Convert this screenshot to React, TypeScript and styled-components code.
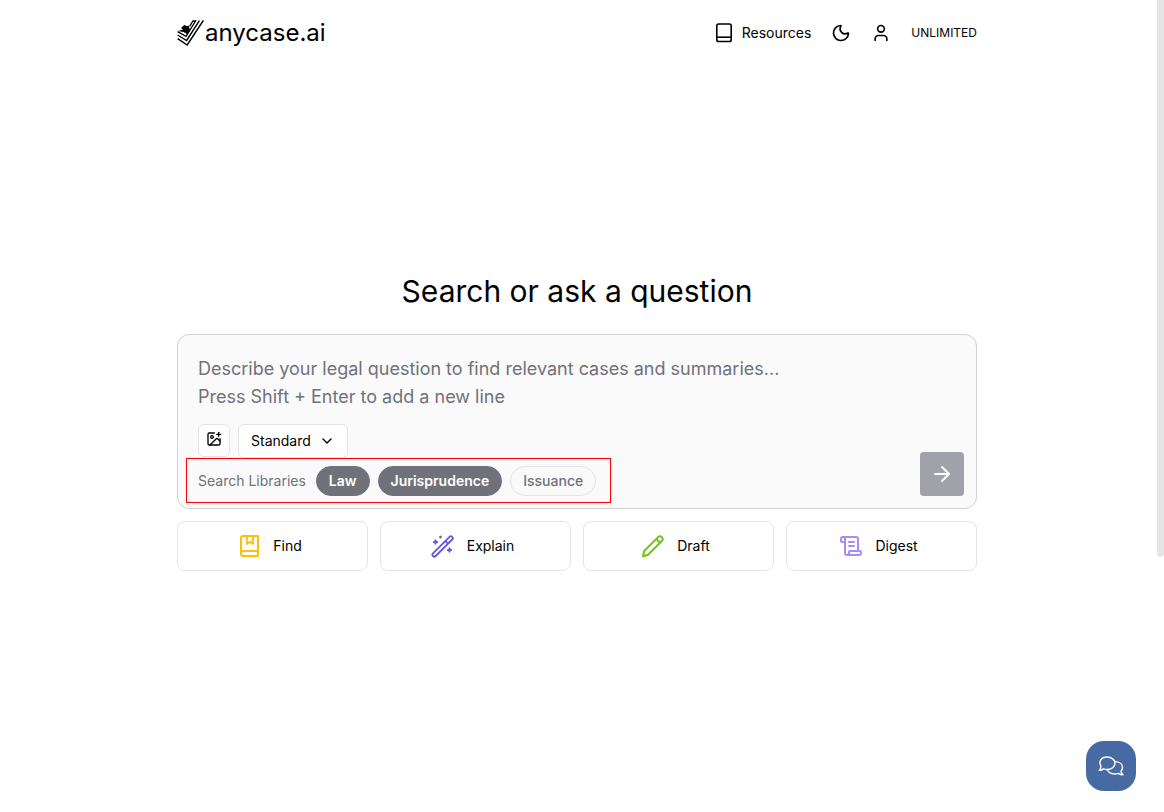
import React, { useState } from "react";
import styled, { createGlobalStyle } from "styled-components";
import { ArrowRight, ChevronDown, ImagePlus, Moon, ScrollText, User } from "lucide-react";

const GlobalStyle = createGlobalStyle`
  *, *::before, *::after { box-sizing: border-box; }
  body {
    margin: 0;
    background: #fff;
    color: #000;
    font-family: Inter, "Liberation Sans", sans-serif;
    font-size: 14px;
    line-height: 20px;
  }
  button, textarea, select { font: inherit; color: inherit; }
  button { cursor: pointer; }
`;

const Page = styled.div`
  display: flex;
  flex-direction: column;
  min-height: 100vh;
  padding: 0 26px 0 16px;
`;

const Header = styled.header`
  display: flex;
  align-items: center;
  justify-content: space-between;
  width: 100%;
  max-width: 800px;
  height: 66px;
  margin: 0 auto;
`;

const Brand = styled.a`
  display: flex;
  align-items: center;
  color: #000;
  font-size: 24px;
  line-height: 32px;
  text-decoration: none;
`;

const Nav = styled.nav`
  display: flex;
  align-items: center;
  gap: 20px;
`;

const NavLink = styled.a`
  display: flex;
  align-items: center;
  gap: 8px;
  color: inherit;
  text-decoration: none;
`;

const IconButton = styled.button`
  display: flex;
  padding: 0;
  border: 0;
  background: none;
`;

const Plan = styled.span`
  font-size: 12px;
  line-height: 16px;
`;

const Main = styled.main`
  width: 100%;
  max-width: 800px;
  margin: 0 auto;
  padding-top: 206px;
`;

const Title = styled.h1`
  margin: 0 0 24px;
  font-size: 30px;
  font-weight: 400;
  line-height: 38px;
  text-align: center;
`;

const SearchCard = styled.form`
  display: flex;
  align-items: flex-end;
  padding: 20px 12px 5px 20px;
  border: 1px solid #d1d1d4;
  border-radius: 12px;
  background: #fafafa;
`;

const Fields = styled.div`
  flex: 1;
  min-width: 0;
`;

const Question = styled.textarea`
  display: block;
  width: 100%;
  height: 56px;
  padding: 0;
  border: 0;
  outline: 0;
  resize: none;
  overflow: hidden;
  background: transparent;
  font-size: 18px;
  line-height: 28px;
  &::placeholder { color: #71717a; opacity: 1; }
`;

const Tools = styled.div`
  display: flex;
  align-items: flex-start;
  gap: 8px;
  margin-top: 13px;
`;

const AttachButton = styled.button`
  display: flex;
  justify-content: center;
  width: 32px;
  height: 33px;
  padding: 6px 0 0;
  border: 1px solid #e4e4e7;
  border-radius: 6px;
  background: #fff;
`;

const ModeField = styled.label`
  display: grid;
  grid-template-columns: 1fr 32px;
  align-items: center;
  width: 110px;
  height: 34px;
  border: 1px solid #e4e4e7;
  border-radius: 6px;
  background: #fff;
  svg { grid-area: 1 / 2; justify-self: start; margin-left: 4px; pointer-events: none; }
`;

const ModeSelect = styled.select`
  grid-area: 1 / 1 / 2 / 3;
  width: 100%;
  height: 32px;
  padding: 0 12px;
  border: 0;
  appearance: none;
  background: transparent;
`;

const Libraries = styled.div`
  display: flex;
  align-items: center;
  gap: 8px;
  width: fit-content;
  height: 45px;
  margin-left: -12px;
  padding: 0 14px 0 11px;
  border: 1px solid #ff0000;
`;

const LibrariesLabel = styled.span`
  margin-right: 2px;
  color: #71717a;
`;

const Chip = styled.button<{ $on: boolean }>`
  height: 30px;
  padding: 0 12px;
  border: 1px solid ${(p) => (p.$on ? "#71717a" : "#e4e4e7")};
  border-radius: 15px;
  background: ${(p) => (p.$on ? "#71717a" : "transparent")};
  color: ${(p) => (p.$on ? "#fff" : "#71717a")};
  font-weight: ${(p) => (p.$on ? 600 : 500)};
`;

const SendButton = styled.button`
  display: flex;
  align-items: center;
  justify-content: center;
  width: 44px;
  height: 44px;
  margin-bottom: 7px;
  padding: 0;
  border: 0;
  border-radius: 4px;
  background: #a1a1aa;
  color: #fff;
`;

const Actions = styled.div`
  display: grid;
  grid-template-columns: repeat(4, 1fr);
  gap: 12px;
  margin-top: 12px;
`;

const ActionButton = styled.button`
  display: flex;
  align-items: center;
  justify-content: center;
  gap: 12px;
  height: 50px;
  padding: 0 8px 0 2px;
  border: 1px solid #e4e4e7;
  border-radius: 8px;
  background: #fff;
`;

const ScrollThumb = styled.div`
  position: fixed;
  top: 0;
  right: 0;
  width: 7px;
  height: 68.6vh;
  border-radius: 0 0 4px 4px;
  background: #e4e4e7;
`;

const ChatButton = styled.button`
  position: fixed;
  right: 28px;
  bottom: 21px;
  display: flex;
  align-items: center;
  justify-content: center;
  width: 50px;
  height: 50px;
  padding: 0;
  border: 0;
  border-radius: 18px;
  background: #486aa2;
  color: #fff;
`;

const LogoMark = () => (
  <svg width="28" height="28" viewBox="0 0 28 28" fill="none" stroke="#000" aria-hidden="true">
    <path d="M4 9 7.2 6l3 1.2 1.6-.6.6 3 .8 1.4-2.8 4.2L6.6 13 1 12l5-1.6z" fill="#000" stroke="none" />
    <path d="M.6 12.6 9 17.4 18.6 2H16l-3.4 5.4" strokeWidth="1.3" />
    <path d="M.6 16 9.6 21.5 22.4 1.6" strokeWidth="1.4" />
    <path d="M.6 19.6 10.2 26 26.4 1.4" strokeWidth="1.5" />
  </svg>
);

const BookIcon = () => (
  <svg width="20" height="20" viewBox="0 0 20 20" fill="none" stroke="currentColor" strokeWidth="1.6" aria-hidden="true">
    <rect x="2.8" y="1" width="14.4" height="17.5" rx="1.8" />
    <path d="M3 14.2h14" />
  </svg>
);

const FindIcon = () => (
  <svg width="24" height="24" viewBox="0 0 24 24" fill="none" stroke="#fdc009" strokeWidth="2" strokeLinejoin="round" aria-hidden="true">
    <path d="M21 17V2H6a2 2 0 0 0-2 2v15M21 17H6a2.5 2.5 0 0 0-2 2.5V20a2 2 0 0 0 2 2h15v-5" />
    <path d="M10 2v8l3-2.3 3 2.3V2" strokeWidth="1.8" />
  </svg>
);

const WandIcon = () => (
  <svg width="24" height="24" viewBox="0 0 24 24" fill="none" stroke="#6d55d9" strokeWidth="1.8" strokeLinecap="round" strokeLinejoin="round" aria-hidden="true">
    <path d="M2 19.3 18.5 2.8a1.9 1.9 0 0 1 2.7 2.7L4.7 22A1.9 1.9 0 0 1 2 19.3ZM14.3 7l2.7 2.7" />
    <path d="m4.5 6 .6 1.4 1.4.6-1.4.6-.6 1.4-.6-1.4L2.5 8l1.4-.6zM18.5 14l.6 1.4 1.4.6-1.4.6-.6 1.4-.6-1.4-1.4-.6 1.4-.6zM9.5 2.2l.8.8-.8.8-.8-.8z" strokeWidth="1.4" />
  </svg>
);

const PencilIcon = () => (
  <svg width="24" height="24" viewBox="0 0 24 24" fill="none" stroke="#70c41c" strokeWidth="2" strokeLinecap="round" strokeLinejoin="round" aria-hidden="true">
    <path d="M2 22.2 3.2 17 17 3.2a2.7 2.7 0 0 1 3.8 0 2.7 2.7 0 0 1 0 3.8L7 20.8zM16 4.2c-.2 2.2 1.6 4 3.8 3.8" />
  </svg>
);

const ChatIcon = () => (
  <svg width="28" height="24" viewBox="0 0 28 24" fill="none" stroke="currentColor" strokeWidth="1.4" strokeLinecap="round" strokeLinejoin="round" aria-hidden="true">
    <path d="M4 12.3C1.2 7.8 4.2 3 10 3c4.7 0 8 2.8 8 6.3 0 3.6-3.5 6.2-8 6.2a10 10 0 0 1-3.5-.6c-1.2 1-2.8 1.5-4.3 1.5 1-1 1.8-2.6 1.8-4.1Z" />
    <path d="M18.8 7.6c4 .3 6.7 2.7 6.7 5.8 0 1.5-.6 2.7-1.5 3.7.1 1.4.9 2.8 1.9 3.7-1.6 0-3.2-.5-4.5-1.4-4.4 1.4-9.3.2-11.1-3.4" />
  </svg>
);

const ACTIONS = [
  { name: "Find", icon: <FindIcon /> },
  { name: "Explain", icon: <WandIcon /> },
  { name: "Draft", icon: <PencilIcon /> },
  { name: "Digest", icon: <ScrollText size={24} color="#a78bfa" /> },
];

const LIBRARIES = ["Law", "Jurisprudence", "Issuance"];

export default function App() {
  const [active, setActive] = useState(["Law", "Jurisprudence"]);
  const toggle = (name: string) =>
    setActive((now) => (now.includes(name) ? now.filter((n) => n !== name) : [...now, name]));

  return (
    <>
      <GlobalStyle />
      <Page>
        <Header>
          <Brand href="#">
            <LogoMark />
            anycase.ai
          </Brand>
          <Nav>
            <NavLink href="#resources">
              <BookIcon />
              Resources
            </NavLink>
            <IconButton aria-label="Dark mode"><Moon size={20} /></IconButton>
            <IconButton aria-label="Account"><User size={20} /></IconButton>
            <Plan>UNLIMITED</Plan>
          </Nav>
        </Header>
        <Main>
          <Title>Search or ask a question</Title>
          <SearchCard onSubmit={(e) => e.preventDefault()}>
            <Fields>
              <Question
                aria-label="Legal question"
                placeholder={"Describe your legal question to find relevant cases and summaries...\nPress Shift + Enter to add a new line"}
              />
              <Tools>
                <AttachButton type="button" aria-label="Add image"><ImagePlus size={16} /></AttachButton>
                <ModeField>
                  <ModeSelect aria-label="Mode">
                    <option>Standard</option>
                  </ModeSelect>
                  <ChevronDown size={16} />
                </ModeField>
              </Tools>
              <Libraries>
                <LibrariesLabel>Search Libraries</LibrariesLabel>
                {LIBRARIES.map((name) => (
                  <Chip
                    key={name}
                    type="button"
                    $on={active.includes(name)}
                    aria-pressed={active.includes(name)}
                    onClick={() => toggle(name)}
                  >
                    {name}
                  </Chip>
                ))}
              </Libraries>
            </Fields>
            <SendButton aria-label="Send"><ArrowRight size={24} /></SendButton>
          </SearchCard>
          <Actions>
            {ACTIONS.map((a) => (
              <ActionButton key={a.name} type="button">
                {a.icon}
                {a.name}
              </ActionButton>
            ))}
          </Actions>
        </Main>
      </Page>
      <ScrollThumb />
      <ChatButton aria-label="Open chat"><ChatIcon /></ChatButton>
    </>
  );
}
